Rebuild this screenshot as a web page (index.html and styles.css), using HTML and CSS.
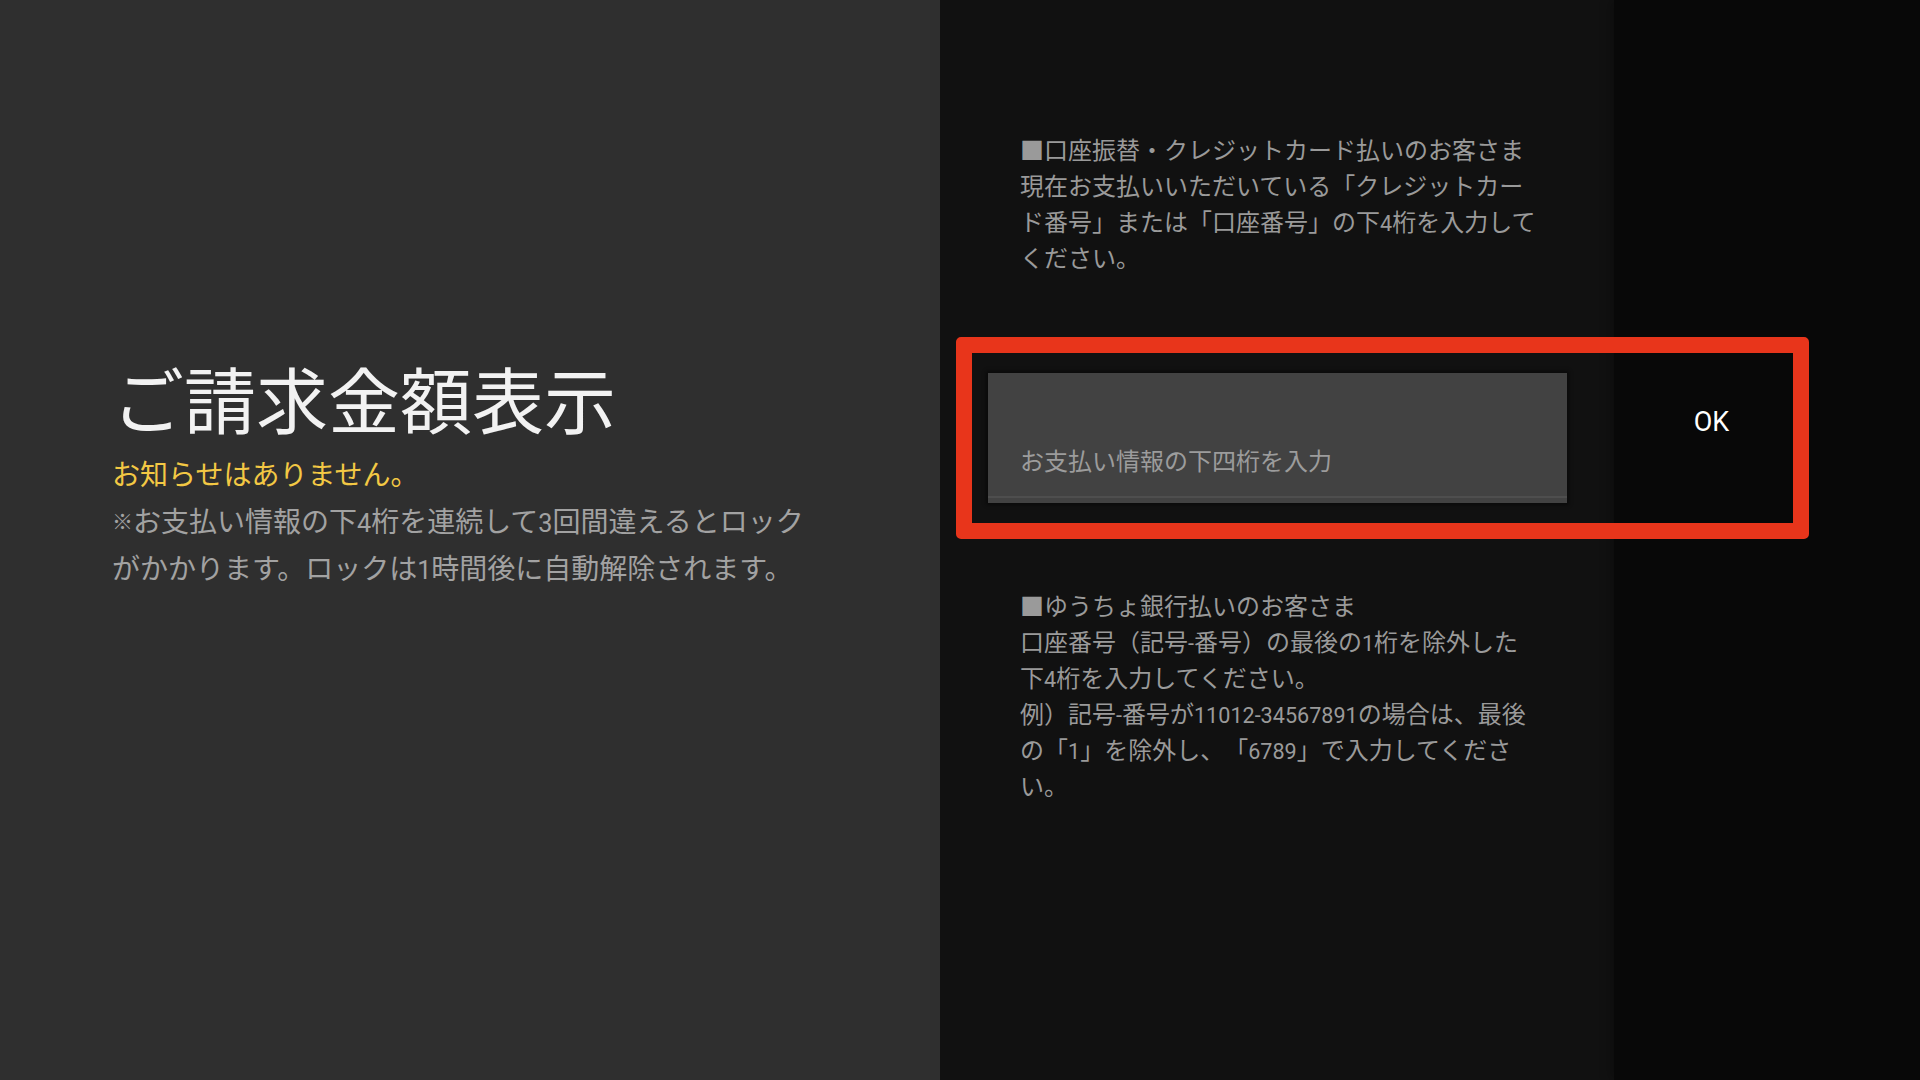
FILE: index.html
```html
<!DOCTYPE html>
<html lang="ja">
<head>
<meta charset="utf-8">
<title>ご請求金額表示</title>
<link rel="stylesheet" href="styles.css">
</head>
<body>
<div class="screen">
  <section class="left">
    <h1 class="title">ご請求金額表示</h1>
    <p class="notice">お知らせはありません。</p>
    <p class="note"><span class="kome">※</span>お支払い情報の下<span class="num">4</span>桁を連続して<span class="num">3</span>回間違えるとロック<br>がかかります。ロックは<span class="num">1</span>時間後に自動解除されます。</p>
  </section>
  <section class="middle">
    <p class="info info-top">■口座振替・クレジットカード払いのお客さま<br>現在お支払いいただいている「クレジットカー<br>ド番号」または「口座番号」の下<span class="num">4</span>桁を入力して<br>ください。</p>
    <div class="field">
      <div class="field-inner">
        <span class="placeholder">お支払い情報の下四桁を入力</span>
      </div>
    </div>
    <p class="info info-bottom">■ゆうちょ銀行払いのお客さま<br>口座番号（記号<span class="num">-</span>番号）の最後の<span class="num">1</span>桁を除外した<br>下<span class="num">4</span>桁を入力してください。<br>例）記号<span class="num">-</span>番号が<span class="num">11012-34567891</span>の場合は、最後<br>の「<span class="num">1</span>」を除外し、「<span class="num">6789</span>」で入力してくださ<br>い。</p>
  </section>
  <section class="right">
    <div class="ok-btn">OK</div>
  </section>
  <div class="focus-ring"></div>
</div>
</body>
</html>
```

FILE: styles.css
```css
html, body {
  margin: 0;
  padding: 0;
  background: #0a0a0a;
}

body {
  font-family: "Noto Sans CJK JP", "Noto Sans", sans-serif;
  text-spacing-trim: space-all;
}

.screen {
  position: relative;
  display: flex;
  width: 1920px;
  height: 1080px;
  overflow: hidden;
}

.num {
  font-family: Roboto, "Noto Sans CJK JP", sans-serif;
  font-size: 0.9em;
  line-height: 1;
}

.kome {
  font-size: 0.75em;
  line-height: 1;
  vertical-align: 3px;
}

.left {
  width: 940px;
  flex: none;
  background: #2f2f2f;
  padding: 352px 0 0 112px;
  box-sizing: border-box;
}

.title {
  margin: 0 0 8px 0;
  font-size: 72px;
  font-weight: 400;
  line-height: 90px;
  color: #f2f2f2;
  white-space: nowrap;
}

.notice {
  margin: 0;
  font-size: 28px;
  line-height: 47px;
  color: #f3c844;
  white-space: nowrap;
}

.note {
  margin: 0;
  font-size: 28px;
  line-height: 47px;
  color: #a2a2a2;
  white-space: nowrap;
}

.middle {
  width: 674px;
  flex: none;
  background: #111111;
  display: flex;
  flex-direction: column;
  box-sizing: border-box;
  padding-top: 131px;
}

.info {
  margin: 0;
  padding-left: 80px;
  font-size: 24px;
  line-height: 36px;
  color: #9a9a9a;
  white-space: nowrap;
}

.field {
  margin: 98px 0 0 48px;
  width: 579px;
  height: 130px;
  background: #424242;
  box-sizing: border-box;
  padding-bottom: 5px;
  box-shadow: 0 0 4px 2px rgba(0, 0, 0, 0.45);
}

.field-inner {
  height: 100%;
  box-sizing: border-box;
  border-bottom: 2px solid #4e4e4e;
  padding: 69px 0 0 32px;
}

.placeholder {
  display: block;
  font-size: 24px;
  line-height: 36px;
  color: #9c9c9c;
  white-space: nowrap;
}

.info-bottom {
  margin-top: 84px;
}

.right {
  flex: 1;
  background: #080808;
  box-shadow: -4px 0 10px rgba(0, 0, 0, 0.25);
  padding-top: 402px;
  box-sizing: border-box;
}

.ok-btn {
  width: 195px;
  text-align: center;
  font-family: Roboto, "Noto Sans CJK JP", sans-serif;
  font-size: 27px;
  line-height: 40px;
  color: #ffffff;
}

.focus-ring {
  position: absolute;
  left: 956px;
  top: 337px;
  width: 853px;
  height: 202px;
  box-sizing: border-box;
  border: 16px solid #e8351b;
  border-radius: 5px;
  pointer-events: none;
}
```
